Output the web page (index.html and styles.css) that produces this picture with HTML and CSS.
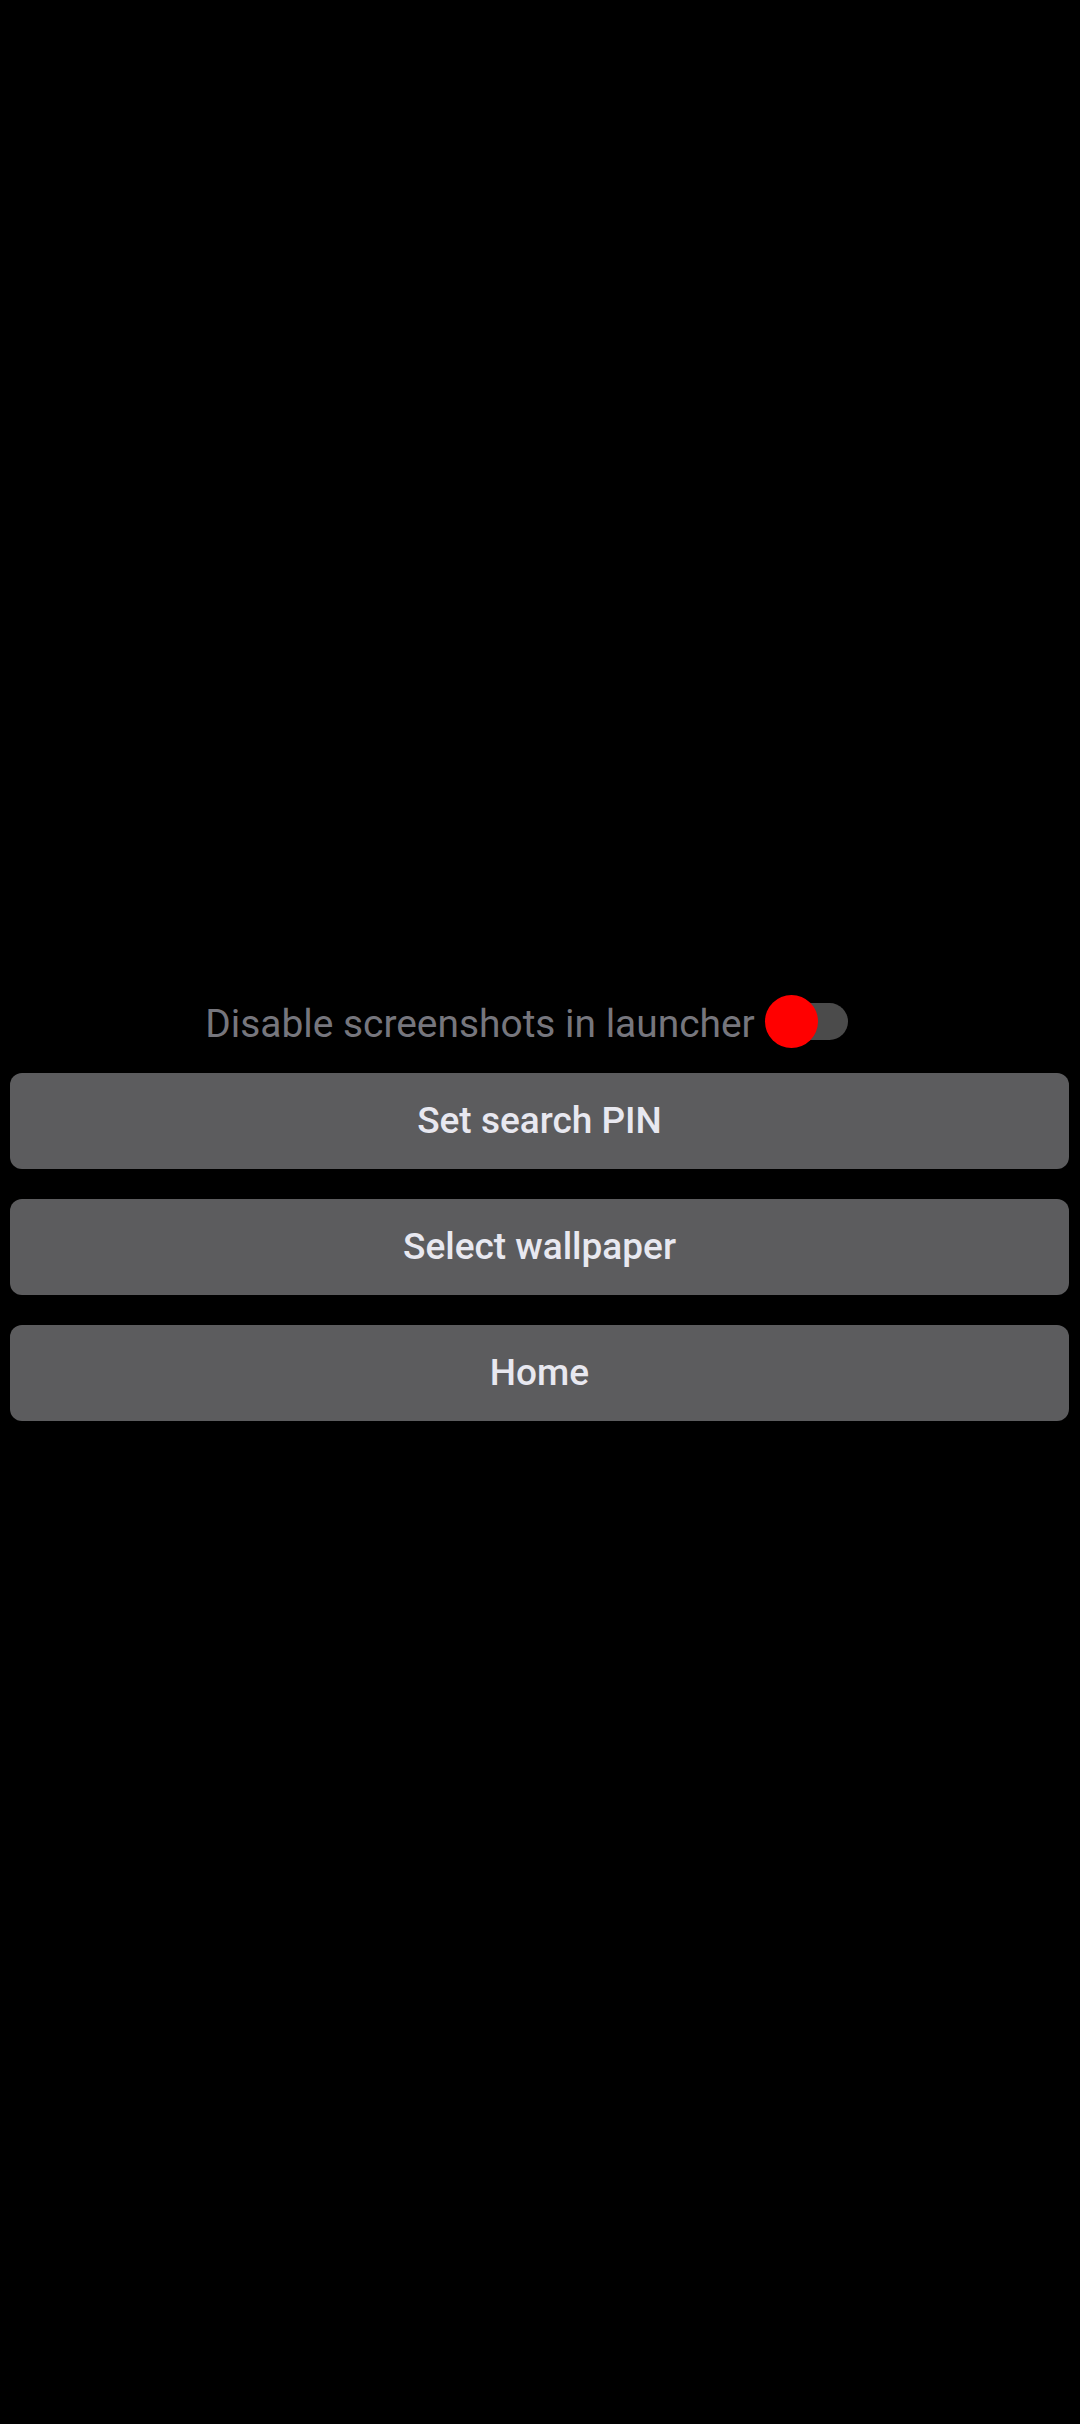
FILE: index.html
```html
<!DOCTYPE html>
<html>
<head>
<meta charset="utf-8">
<link rel="stylesheet" href="styles.css">
</head>
<body>
<main class="screen">
  <section class="panel">
    <div class="toggle-row">
      <span class="toggle-label">Disable screenshots in launcher</span>
      <span class="switch">
        <span class="track"></span>
        <span class="thumb"></span>
      </span>
    </div>
    <div class="buttons">
      <button class="btn">Set search PIN</button>
      <button class="btn">Select wallpaper</button>
      <button class="btn">Home</button>
    </div>
  </section>
</main>
</body>
</html>
```

FILE: styles.css
```css
html, body {
  margin: 0;
  padding: 0;
  background: #000;
}
body {
  width: 1080px;
  height: 2424px;
  font-family: Roboto, "Noto Sans", sans-serif;
}
.screen {
  height: 2424px;
  display: flex;
  flex-direction: column;
  justify-content: center;
}
.panel {
  display: flex;
  flex-direction: column;
  margin-bottom: 8px;
}
.toggle-row {
  height: 52px;
  display: flex;
  align-items: center;
  justify-content: center;
  margin-bottom: 25px;
}
.toggle-label {
  font-size: 38.9px;
  font-weight: 400;
  color: #76767d;
  line-height: 52px;
  position: relative;
  top: 2px;
}
.switch {
  position: relative;
  width: 120px;
  height: 53px;
}
.track {
  position: absolute;
  left: 22px;
  right: 27px;
  top: 8px;
  height: 37px;
  border-radius: 19px;
  background: #4b4b4b;
}
.thumb {
  position: absolute;
  left: 10px;
  top: 0;
  width: 53px;
  height: 53px;
  border-radius: 50%;
  background: #ff0000;
}
.buttons {
  display: flex;
  flex-direction: column;
  gap: 30px;
  padding: 0 11px 0 10px;
}
.btn {
  height: 96px;
  border: none;
  border-radius: 12px;
  background: #5c5c5e;
  color: #e8e8f0;
  font-family: Roboto, "Noto Sans", sans-serif;
  font-weight: 500;
  font-size: 37px;
  padding: 0;
}
```
